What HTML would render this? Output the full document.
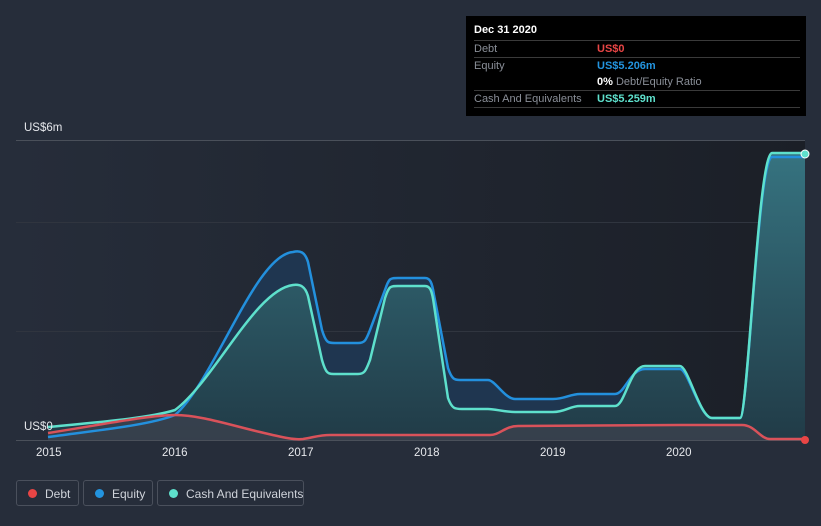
<!DOCTYPE html>
<html><head><style>
html,body{margin:0;width:821px;height:526px;overflow:hidden}
body{background:#262d3a;font-family:"Liberation Sans",sans-serif;position:relative}
.tt{position:absolute;left:466px;top:16px;width:340px;height:100px;background:#000;color:#fff;font-size:11px}
.row{position:absolute;left:8px;width:326px;border-top:1px solid #3a3a3a;height:16px;line-height:16px}
.lab{position:absolute;left:0;color:#8a8f98}
.val{position:absolute;left:123px;font-weight:bold}
.leg{position:absolute;top:480px;height:26px;border:1px solid #4a505c;border-radius:3px;color:#cfd3da;font-size:12px;line-height:26px;box-sizing:border-box;white-space:nowrap}
.leg i{position:absolute;left:11px;top:8px;width:9px;height:9px;border-radius:50%}
.leg span{position:absolute;left:28px}
.ax{position:absolute;color:#e6e8ec;font-size:11.5px}
</style></head><body>
<svg width="821" height="526" style="position:absolute;left:0;top:0">
<defs>
<linearGradient id="bg" x1="0" x2="1"><stop offset="0" stop-color="#262d3a"/><stop offset="1" stop-color="#1b1f27"/></linearGradient>
<linearGradient id="cf" x1="0" y1="0" x2="0" y2="1"><stop offset="0" stop-color="#367380"/><stop offset="1" stop-color="#213b47"/></linearGradient>
</defs>
<rect x="16" y="140" width="789" height="300" fill="url(#bg)"/>
<line x1="16" y1="140.5" x2="805" y2="140.5" stroke="#4a505a"/>
<line x1="16" y1="222.5" x2="805" y2="222.5" stroke="#30353f"/>
<line x1="16" y1="331.5" x2="805" y2="331.5" stroke="#30353f"/>
<line x1="16" y1="440.5" x2="805" y2="440.5" stroke="#4a505a"/>
<path d="M48 437 C100 430,150 425,175 415 C215 380,255 255,293 252 C300 250,305 252,308 262 L322 330 C326 343,328 343,335 343 L358 343 C365 343,366 340,370 330 L385 290 C389 278,390 278,398 278 L425 278 C430 278,432 282,434 295 L448 368 C452 380,455 380,460 380 L488 380 C495 380,505 399,515 399 L553 399 C565 399,570 394,580 394 L615 394 C625 394,630 369,645 369 L680 369 C688 369,700 418,712 418 L740 418 C748 418,758 157,772 157 L805 157 L805 440 L48 440Z" fill="#1f3650"/>
<path d="M48 427 C100 422,150 418,175 410 C215 380,255 290,293 285 C300 284,305 286,308 296 L322 360 C326 374,328 374,335 374 L358 374 C365 374,366 370,370 360 L385 298 C389 286,390 286,398 286 L425 286 C430 286,432 290,434 305 L448 398 C452 409,455 409,462 409 L488 409 C495 409,505 412,515 412 L553 412 C565 412,570 406,580 406 L615 406 C625 406,630 366,645 366 L680 366 C688 366,700 418,712 418 L740 418 C748 418,758 153,772 153 L805 153 L805 440 L48 440Z" fill="url(#cf)"/>
<path d="M48 433 C100 425,150 415,175 415 C200 415,230 425,260 432 C285 438,295 440,303 439 C315 437,320 435,330 435 L490 435 C500 435,505 426,518 426 L680 425 L742 425 C755 425,760 439,770 439 L805 439 L805 440 L48 440Z" fill="#3c414d" opacity="0.8"/>
<g fill="none" stroke-width="2.5" stroke-linejoin="round">
<path d="M48 437 C100 430,150 425,175 415 C215 380,255 255,293 252 C300 250,305 252,308 262 L322 330 C326 343,328 343,335 343 L358 343 C365 343,366 340,370 330 L385 290 C389 278,390 278,398 278 L425 278 C430 278,432 282,434 295 L448 368 C452 380,455 380,460 380 L488 380 C495 380,505 399,515 399 L553 399 C565 399,570 394,580 394 L615 394 C625 394,630 369,645 369 L680 369 C688 369,700 418,712 418 L740 418 C748 418,758 157,772 157 L805 157" stroke="#2390dd"/>
<path d="M48 427 C100 422,150 418,175 410 C215 380,255 290,293 285 C300 284,305 286,308 296 L322 360 C326 374,328 374,335 374 L358 374 C365 374,366 370,370 360 L385 298 C389 286,390 286,398 286 L425 286 C430 286,432 290,434 305 L448 398 C452 409,455 409,462 409 L488 409 C495 409,505 412,515 412 L553 412 C565 412,570 406,580 406 L615 406 C625 406,630 366,645 366 L680 366 C688 366,700 418,712 418 L740 418 C748 418,758 153,772 153 L805 153" stroke="#5ee0cc"/>
<path d="M48 433 C100 425,150 415,175 415 C200 415,230 425,260 432 C285 438,295 440,303 439 C315 437,320 435,330 435 L490 435 C500 435,505 426,518 426 L680 425 L742 425 C755 425,760 439,770 439 L805 439" stroke="#d9525a"/>
</g>
<circle cx="805" cy="154" r="4" fill="#5ee0cc" stroke="#fff" stroke-width="1"/>
<circle cx="805" cy="440" r="4" fill="#e84545"/>
</svg>
<div class="ax" style="left:24px;top:122px">US$6m</div>
<div class="ax" style="left:24px;top:421px">US$0</div>
<div class="ax" style="left:36px;top:447px">2015</div>
<div class="ax" style="left:162px;top:447px">2016</div>
<div class="ax" style="left:288px;top:447px">2017</div>
<div class="ax" style="left:414px;top:447px">2018</div>
<div class="ax" style="left:540px;top:447px">2019</div>
<div class="ax" style="left:666px;top:447px">2020</div>
<div class="tt">
<div style="position:absolute;left:8px;top:8px;font-weight:bold">Dec 31 2020</div>
<div class="row" style="top:24px"><span class="lab">Debt</span><span class="val" style="color:#e84545">US$0</span></div>
<div class="row" style="top:41px"><span class="lab">Equity</span><span class="val" style="color:#2394df">US$5.206m</span></div>
<div style="position:absolute;left:131px;top:58px;line-height:16px"><b>0%</b> <span style="color:#8a8f98">Debt/Equity Ratio</span></div>
<div class="row" style="top:74px;border-bottom:1px solid #3a3a3a"><span class="lab">Cash And Equivalents</span><span class="val" style="color:#5ee0cc">US$5.259m</span></div>
</div>
<div class="leg" style="left:16px;width:63px"><i style="background:#e84545"></i><span>Debt</span></div>
<div class="leg" style="left:83px;width:70px"><i style="background:#2394df"></i><span>Equity</span></div>
<div class="leg" style="left:157px;width:147px"><i style="background:#5ee0cc"></i><span>Cash And Equivalents</span></div>
</body></html>
